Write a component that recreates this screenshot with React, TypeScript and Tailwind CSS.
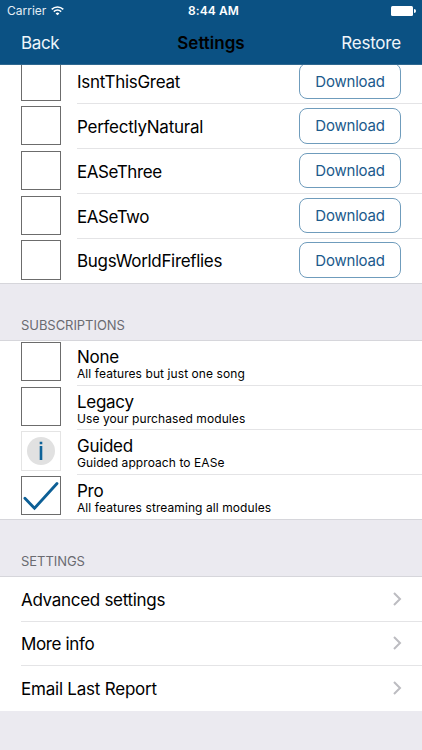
import React from 'react';

const modules = [
  { name: 'IsntThisGreat', tracking: 'tracking-[-0.28px]' },
  { name: 'PerfectlyNatural', tracking: 'tracking-[-0.26px]' },
  { name: 'EASeThree', tracking: 'tracking-[-0.42px]' },
  { name: 'EASeTwo', tracking: 'tracking-[-0.45px]' },
  { name: 'BugsWorldFireflies', tracking: 'tracking-[-0.32px]' },
];

type Mark = 'empty' | 'info' | 'check';

const plans: { name: string; detail: string; mark: Mark }[] = [
  { name: 'None', detail: 'All features but just one song', mark: 'empty' },
  { name: 'Legacy', detail: 'Use your purchased modules', mark: 'empty' },
  { name: 'Guided', detail: 'Guided approach to EASe', mark: 'info' },
  { name: 'Pro', detail: 'All features streaming all modules', mark: 'check' },
];

const links = [
  { label: 'Advanced settings', tracking: 'tracking-[-0.3px]' },
  { label: 'More info', tracking: 'tracking-[-0.36px]' },
  { label: 'Email Last Report', tracking: 'tracking-[-0.22px]' },
];

function Box({ mark = 'empty' }: { mark?: Mark }) {
  return (
    <div
      className={`h-[39.4px] w-10 shrink-0 border ${
        mark === 'info' ? 'border-[#e4e4e4]' : 'border-[#6c6c6c]'
      }`}
    >
      {mark === 'info' && (
        <svg viewBox="0 0 38 38" className="h-[38px] w-[38px]">
          <circle cx="19" cy="19" r="14" fill="#e1e1e1" />
          <path d="M19 14V28M19 9.7v2.6" stroke="#0f6399" strokeWidth="2.6" />
        </svg>
      )}
      {mark === 'check' && (
        <svg viewBox="0 0 38 38" className="h-[38px] w-[38px]" fill="none">
          <path
            d="M2.9 21.3L12.5 31.3L35 6.5"
            stroke="#0c5f96"
            strokeWidth="2.8"
            strokeLinecap="round"
          />
        </svg>
      )}
    </div>
  );
}

function StatusBar() {
  return (
    <div className="grid h-[21px] grid-cols-3 items-center pl-[7px] pr-[6px] pt-px text-[12px] leading-none text-white">
      <div className="flex items-center gap-[5px]">
        <span className="text-[12px] text-[#e4edf4]">Carrier</span>
        <svg width="13" height="10" viewBox="0 0 13 10" fill="none" stroke="white" strokeWidth="1.5">
          <path d="M0.7 3.4C4 .1 9 .1 12.3 3.4" />
          <path d="M2.8 5.6C5 3.6 8 3.6 10.2 5.6" />
          <path d="M4.6 7.4Q6.5 5.8 8.4 7.4L6.5 9.3Z" fill="white" stroke="none" />
        </svg>
      </div>
      <div className="pl-[4px] text-center font-semibold tracking-[0.1px]">8:44 AM</div>
      <div className="flex items-center justify-end gap-px">
        <div className="h-[10px] w-[22px] rounded-[1.5px] bg-white" />
        <div className="h-[4px] w-[1.5px] rounded-r-full bg-white" />
      </div>
    </div>
  );
}

function SectionTitle({ children }: { children: string }) {
  return (
    <div className="flex h-[57.6px] items-end border-y border-[#d6d6db] bg-[#ebeaf0] pb-[6.6px] pl-[21px] text-[13px] leading-[15px] tracking-[-0.05px] text-[#6a6a70]">
      {children}
    </div>
  );
}

export default function App() {
  return (
    <div className="flex h-[750px] w-[422px] flex-col overflow-hidden bg-[#ebeaf0] font-['Inter','Liberation_Sans',sans-serif] text-black">
      <header className="h-[65px] shrink-0 border-b border-[#2f6890] bg-[#0b5183]">
        <StatusBar />
        <nav className="grid h-[45px] grid-cols-3 items-center px-[21px] text-[17px] leading-none">
          <span className="tracking-[-0.35px] text-[#f0f6fa]">Back</span>
          <span className="text-center font-semibold">Settings</span>
          <span className="text-right tracking-[-0.2px] text-[#f0f6fa]">Restore</span>
        </nav>
      </header>

      <main className="min-h-0 flex-1 overflow-hidden">
        <section className="-mt-[5.6px] bg-white">
          {modules.map((m, i) => (
            <div key={m.name} className="flex h-[44.8px] pl-[21px]">
              <div className="pt-[1.8px]">
                <Box />
              </div>
              <div
                className={`ml-4 flex flex-1 items-center justify-between border-b pr-[21px] ${
                  i === modules.length - 1 ? 'border-transparent' : 'border-[#e4e4e6]'
                }`}
              >
                <span className={`pt-[2px] text-[17px] leading-[20px] ${m.tracking}`}>{m.name}</span>
                <button className="mb-[0.6px] h-[35.6px] w-[102px] rounded-[8px] border border-[#6f9cbc] text-[15px] leading-none tracking-[-0.2px] text-[#1b5a8c]">
                  Download
                </button>
              </div>
            </div>
          ))}
        </section>

        <SectionTitle>SUBSCRIPTIONS</SectionTitle>
        <section className="bg-white">
          {plans.map((p, i) => (
            <div key={p.name} className="flex h-[44.6px] pl-[21px]">
              <div className="pt-px">
                <Box mark={p.mark} />
              </div>
              <div
                className={`ml-4 flex-1 border-b pt-[6.2px] ${
                  i === plans.length - 1 ? 'border-transparent' : 'border-[#e4e4e6]'
                }`}
              >
                <div className="text-[17px] leading-[20px] tracking-[-0.3px]">{p.name}</div>
                <div className="text-[12px] leading-[14px] tracking-[0.08px]">{p.detail}</div>
              </div>
            </div>
          ))}
        </section>

        <SectionTitle>SETTINGS</SectionTitle>
        <section className="bg-white">
          {links.map((link, i) => (
            <div key={link.label} className="pl-[21px]">
              <div
                className={`flex h-[44.6px] items-center justify-between border-b pr-[20px] ${
                  i === links.length - 1 ? 'border-transparent' : 'border-[#e4e4e6]'
                }`}
              >
                <span className={`pt-[2px] text-[17px] leading-[20px] ${link.tracking}`}>
                  {link.label}
                </span>
                <svg width="9" height="14" viewBox="0 0 9 14" fill="none">
                  <path d="M1 1L7 7L1 13" stroke="#bcbcc1" strokeWidth="2" />
                </svg>
              </div>
            </div>
          ))}
        </section>
      </main>
    </div>
  );
}
